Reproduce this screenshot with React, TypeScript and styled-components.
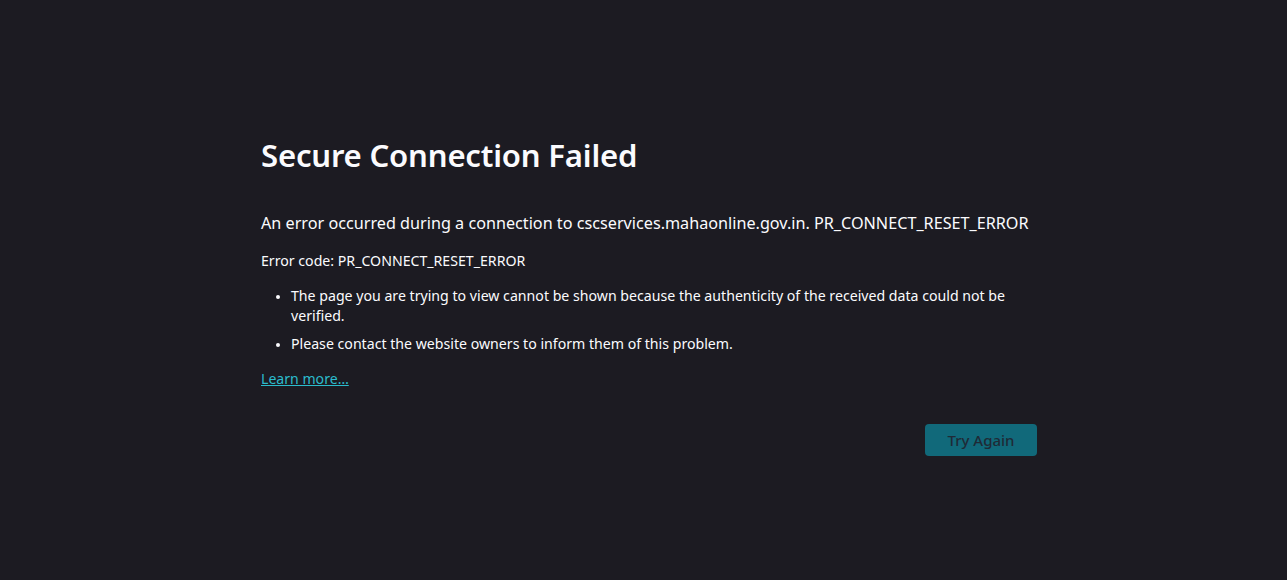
import React from "react";
import styled, { createGlobalStyle } from "styled-components";

const Global = createGlobalStyle`
  html, body { margin: 0; padding: 0; background: #1c1b22; }
  body { font-family: "Noto Sans", "Open Sans", sans-serif; color: #fbfbfe; }
`;

const Page = styled.div`
  width: 1287px;
  height: 580px;
  box-sizing: border-box;
  padding: 132px 0 0 261px;
`;

const Container = styled.div`
  width: 776px;
  display: flex;
  flex-direction: column;
`;

const Title = styled.h1`
  margin: 0;
  font-size: 31.1px;
  font-weight: 600;
  line-height: 46px;
  letter-spacing: -0.2px;
`;

const ShortDesc = styled.p`
  margin: 34px 0 0;
  font-size: 16.2px;
  line-height: 22px;
  white-space: nowrap;
`;

const Code = styled.p`
  margin: 17px 0 0;
  font-size: 14.15px;
  line-height: 20px;
`;

const List = styled.ul`
  margin: 15px 0 0;
  padding: 0 0 0 30px;
  font-size: 14.15px;
  line-height: 20px;
`;

const Item = styled.li`
  margin-bottom: 8px;
  &::marker { font-size: 12px; }
`;

const Link = styled.a`
  margin-top: 7px;
  font-size: 14.1px;
  line-height: 20px;
  color: #2bbccd;
  text-decoration: underline;
  align-self: flex-start;
`;

const ButtonRow = styled.div`
  display: flex;
  justify-content: flex-end;
  margin-top: 35px;
`;

const Button = styled.button`
  width: 112px;
  height: 32px;
  border: none;
  border-radius: 4px;
  background: #11697a;
  color: #1f2a36;
  font-family: inherit;
  font-size: 15px;
  font-weight: 500;
`;

export default function App() {
  return (
    <Page>
      <Global />
      <Container>
        <Title>Secure Connection Failed</Title>
        <ShortDesc>
          An error occurred during a connection to cscservices.mahaonline.gov.in. PR_CONNECT_RESET_ERROR
        </ShortDesc>
        <Code>Error code: PR_CONNECT_RESET_ERROR</Code>
        <List>
          <Item>
            The page you are trying to view cannot be shown because the authenticity of the received data could not be verified.
          </Item>
          <Item>Please contact the website owners to inform them of this problem.</Item>
        </List>
        <Link href="#">Learn more…</Link>
        <ButtonRow>
          <Button>Try Again</Button>
        </ButtonRow>
      </Container>
    </Page>
  );
}
